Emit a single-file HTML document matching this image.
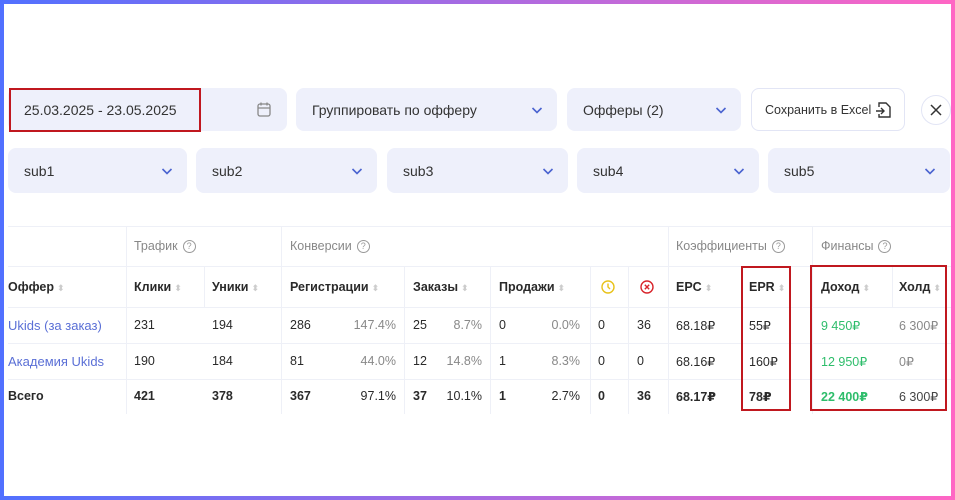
<!DOCTYPE html>
<html><head><meta charset="utf-8"><style>
*{box-sizing:border-box;margin:0;padding:0}
body{width:955px;height:500px;overflow:hidden;background:linear-gradient(90deg,#5170ff,#ff66c4);font-family:"Liberation Sans","DejaVu Sans",sans-serif;position:relative}
.in{position:absolute;left:4px;top:4px;right:4px;bottom:4px;background:#fff}
.a{position:absolute}
.box{position:absolute;background:#eef0fb;border-radius:8px;font-size:14px;color:#333;display:flex;align-items:center;padding-left:16px}
.chev{position:absolute;right:14px;top:50%;margin-top:-6px}
.t{position:absolute;font-size:12.5px;color:#2a2a2a;white-space:nowrap}
.b{font-weight:bold}
.g{color:#888}
.lnk{color:#5a6fd6}
.gr{color:#2ebd6b}
.hl{position:absolute;height:1px;background:#eef0f7}
.vl{position:absolute;width:1px;background:#eef0f7}
.s{color:#ccc;font-size:9px;margin-left:3px}
.q{display:inline-block;width:13px;height:13px;border:1px solid #999;border-radius:50%;font-size:9px;text-align:center;line-height:11px;color:#999;margin-left:5px;vertical-align:1px}
.red{position:absolute;border:2px solid #c0181f}
</style></head><body><div class="in"></div>
<svg width="0" height="0" style="position:absolute"><defs><symbol id="cv" viewBox="0 0 12 12"><path d="M1.5 4l4.5 4.5 4.5-4.5" fill="none" stroke="#4a63d0" stroke-width="1.6"/></symbol></defs></svg>

<div class="box" style="left:8px;top:88px;width:279px;height:43px">25.03.2025 - 23.05.2025
<svg class="a" style="left:249px;top:14px" width="14" height="15" viewBox="0 0 14 15"><rect x="1" y="2" width="12" height="12" rx="2" fill="none" stroke="#888" stroke-width="1.3"/><path d="M1 6h12M4 0.5v3M10 0.5v3" stroke="#888" stroke-width="1.3"/></svg></div>
<div class="red" style="left:9px;top:88px;width:192px;height:44px"></div>
<div class="box" style="left:296px;top:88px;width:261px;height:43px">Группировать по офферу<svg class="chev" width="12" height="12"><use href="#cv"/></svg></div>
<div class="box" style="left:567px;top:88px;width:174px;height:43px">Офферы (2)<svg class="chev" width="12" height="12"><use href="#cv"/></svg></div>
<div class="box" style="left:751px;top:88px;width:154px;height:43px;background:#fff;border:1px solid #e2e5f5;font-size:12.5px;padding-left:13px">Сохранить в Excel
<svg class="a" style="left:123px;top:12px" width="16" height="18" viewBox="0 0 16 18"><path d="M4 6V2h7l4 4v10H4v-3" fill="none" stroke="#333" stroke-width="1.4"/><path d="M1 10h8M6 7l3 3-3 3" fill="none" stroke="#333" stroke-width="1.4"/></svg></div>
<div class="a" style="left:921px;top:95px;width:30px;height:30px;border:1px solid #e2e5f5;border-radius:50%"><svg class="a" style="left:8px;top:8px" width="12" height="12"><path d="M1 1l10 10M11 1L1 11" stroke="#333" stroke-width="1.5"/></svg></div>

<div class="box" style="left:8px;top:148px;width:179px;height:45px">sub1<svg class="chev" width="12" height="12"><use href="#cv"/></svg></div>
<div class="box" style="left:196px;top:148px;width:181px;height:45px">sub2<svg class="chev" width="12" height="12"><use href="#cv"/></svg></div>
<div class="box" style="left:387px;top:148px;width:181px;height:45px">sub3<svg class="chev" width="12" height="12"><use href="#cv"/></svg></div>
<div class="box" style="left:577px;top:148px;width:182px;height:45px">sub4<svg class="chev" width="12" height="12"><use href="#cv"/></svg></div>
<div class="box" style="left:768px;top:148px;width:182px;height:45px">sub5<svg class="chev" width="12" height="12"><use href="#cv"/></svg></div>

<div class="hl" style="left:8px;width:943px;top:226px"></div>
<div class="hl" style="left:8px;width:943px;top:266px"></div>
<div class="hl" style="left:8px;width:943px;top:307px"></div>
<div class="hl" style="left:8px;width:943px;top:343px"></div>
<div class="hl" style="left:8px;width:943px;top:379px"></div>
<div class="vl" style="left:126px;top:226px;height:188px"></div>
<div class="vl" style="left:281px;top:226px;height:188px"></div>
<div class="vl" style="left:668px;top:226px;height:188px"></div>
<div class="vl" style="left:812px;top:226px;height:188px"></div>
<div class="vl" style="left:204px;top:266px;height:41px"></div>
<div class="vl" style="left:404px;top:266px;height:148px"></div>
<div class="vl" style="left:490px;top:266px;height:148px"></div>
<div class="vl" style="left:590px;top:266px;height:148px"></div>
<div class="vl" style="left:628px;top:266px;height:148px"></div>
<div class="vl" style="left:892px;top:266px;height:41px"></div>

<div class="t g" style="left:134px;top:239px">Трафик<span class="q">?</span></div>
<div class="t g" style="left:290px;top:239px">Конверсии<span class="q">?</span></div>
<div class="t g" style="left:676px;top:239px">Коэффициенты<span class="q">?</span></div>
<div class="t g" style="left:821px;top:239px">Финансы<span class="q">?</span></div>

<div class="t b" style="left:8px;top:280px">Оффер<span class="s">⬍</span></div>
<div class="t b" style="left:134px;top:280px">Клики<span class="s">⬍</span></div>
<div class="t b" style="left:212px;top:280px">Уники<span class="s">⬍</span></div>
<div class="t b" style="left:290px;top:280px">Регистрации<span class="s">⬍</span></div>
<div class="t b" style="left:413px;top:280px">Заказы<span class="s">⬍</span></div>
<div class="t b" style="left:499px;top:280px">Продажи<span class="s">⬍</span></div>
<svg class="a" style="left:601px;top:280px" width="14" height="14"><circle cx="7" cy="7" r="6" fill="none" stroke="#e8c21a" stroke-width="1.4"/><path d="M7 3.5V7l2 2" fill="none" stroke="#e8c21a" stroke-width="1.4"/></svg>
<svg class="a" style="left:640px;top:280px" width="14" height="14"><circle cx="7" cy="7" r="6" fill="none" stroke="#d8242b" stroke-width="1.4"/><path d="M4.8 4.8l4.4 4.4M9.2 4.8l-4.4 4.4" stroke="#d8242b" stroke-width="1.4"/></svg>
<div class="t b" style="left:676px;top:280px">EPC<span class="s">⬍</span></div>
<div class="t b" style="left:749px;top:280px">EPR<span class="s">⬍</span></div>
<div class="t b" style="left:821px;top:280px">Доход<span class="s">⬍</span></div>
<div class="t b" style="left:899px;top:280px">Холд<span class="s">⬍</span></div>

<div class="t lnk" style="left:8px;top:318px;font-size:13px">Ukids (за заказ)</div>
<div class="t" style="left:134px;top:318px">231</div><div class="t" style="left:212px;top:318px">194</div>
<div class="t" style="left:290px;top:318px">286</div><div class="t g" style="right:559px;top:318px">147.4%</div>
<div class="t" style="left:413px;top:318px">25</div><div class="t g" style="right:473px;top:318px">8.7%</div>
<div class="t" style="left:499px;top:318px">0</div><div class="t g" style="right:375px;top:318px">0.0%</div>
<div class="t" style="left:598px;top:318px">0</div><div class="t" style="left:637px;top:318px">36</div>
<div class="t" style="left:676px;top:318px">68.18₽</div><div class="t" style="left:749px;top:318px">55₽</div>
<div class="t gr" style="left:821px;top:318px">9 450₽</div><div class="t g" style="left:899px;top:318px">6 300₽</div>

<div class="t lnk" style="left:8px;top:354px;font-size:13px">Академия Ukids</div>
<div class="t" style="left:134px;top:354px">190</div><div class="t" style="left:212px;top:354px">184</div>
<div class="t" style="left:290px;top:354px">81</div><div class="t g" style="right:559px;top:354px">44.0%</div>
<div class="t" style="left:413px;top:354px">12</div><div class="t g" style="right:473px;top:354px">14.8%</div>
<div class="t" style="left:499px;top:354px">1</div><div class="t g" style="right:375px;top:354px">8.3%</div>
<div class="t" style="left:598px;top:354px">0</div><div class="t" style="left:637px;top:354px">0</div>
<div class="t" style="left:676px;top:354px">68.16₽</div><div class="t" style="left:749px;top:354px">160₽</div>
<div class="t gr" style="left:821px;top:354px">12 950₽</div><div class="t g" style="left:899px;top:354px">0₽</div>

<div class="t b" style="left:8px;top:389px">Всего</div>
<div class="t b" style="left:134px;top:389px">421</div><div class="t b" style="left:212px;top:389px">378</div>
<div class="t b" style="left:290px;top:389px">367</div><div class="t" style="right:559px;top:389px">97.1%</div>
<div class="t b" style="left:413px;top:389px">37</div><div class="t" style="right:473px;top:389px">10.1%</div>
<div class="t b" style="left:499px;top:389px">1</div><div class="t" style="right:375px;top:389px">2.7%</div>
<div class="t b" style="left:598px;top:389px">0</div><div class="t b" style="left:637px;top:389px">36</div>
<div class="t b" style="left:676px;top:389px">68.17₽</div><div class="t b" style="left:749px;top:389px">78₽</div>
<div class="t b gr" style="left:821px;top:389px">22 400₽</div><div class="t" style="left:899px;top:389px;color:#444">6 300₽</div>

<div class="red" style="left:741px;top:266px;width:50px;height:145px"></div>
<div class="red" style="left:810px;top:265px;width:137px;height:146px"></div>
</body></html>
